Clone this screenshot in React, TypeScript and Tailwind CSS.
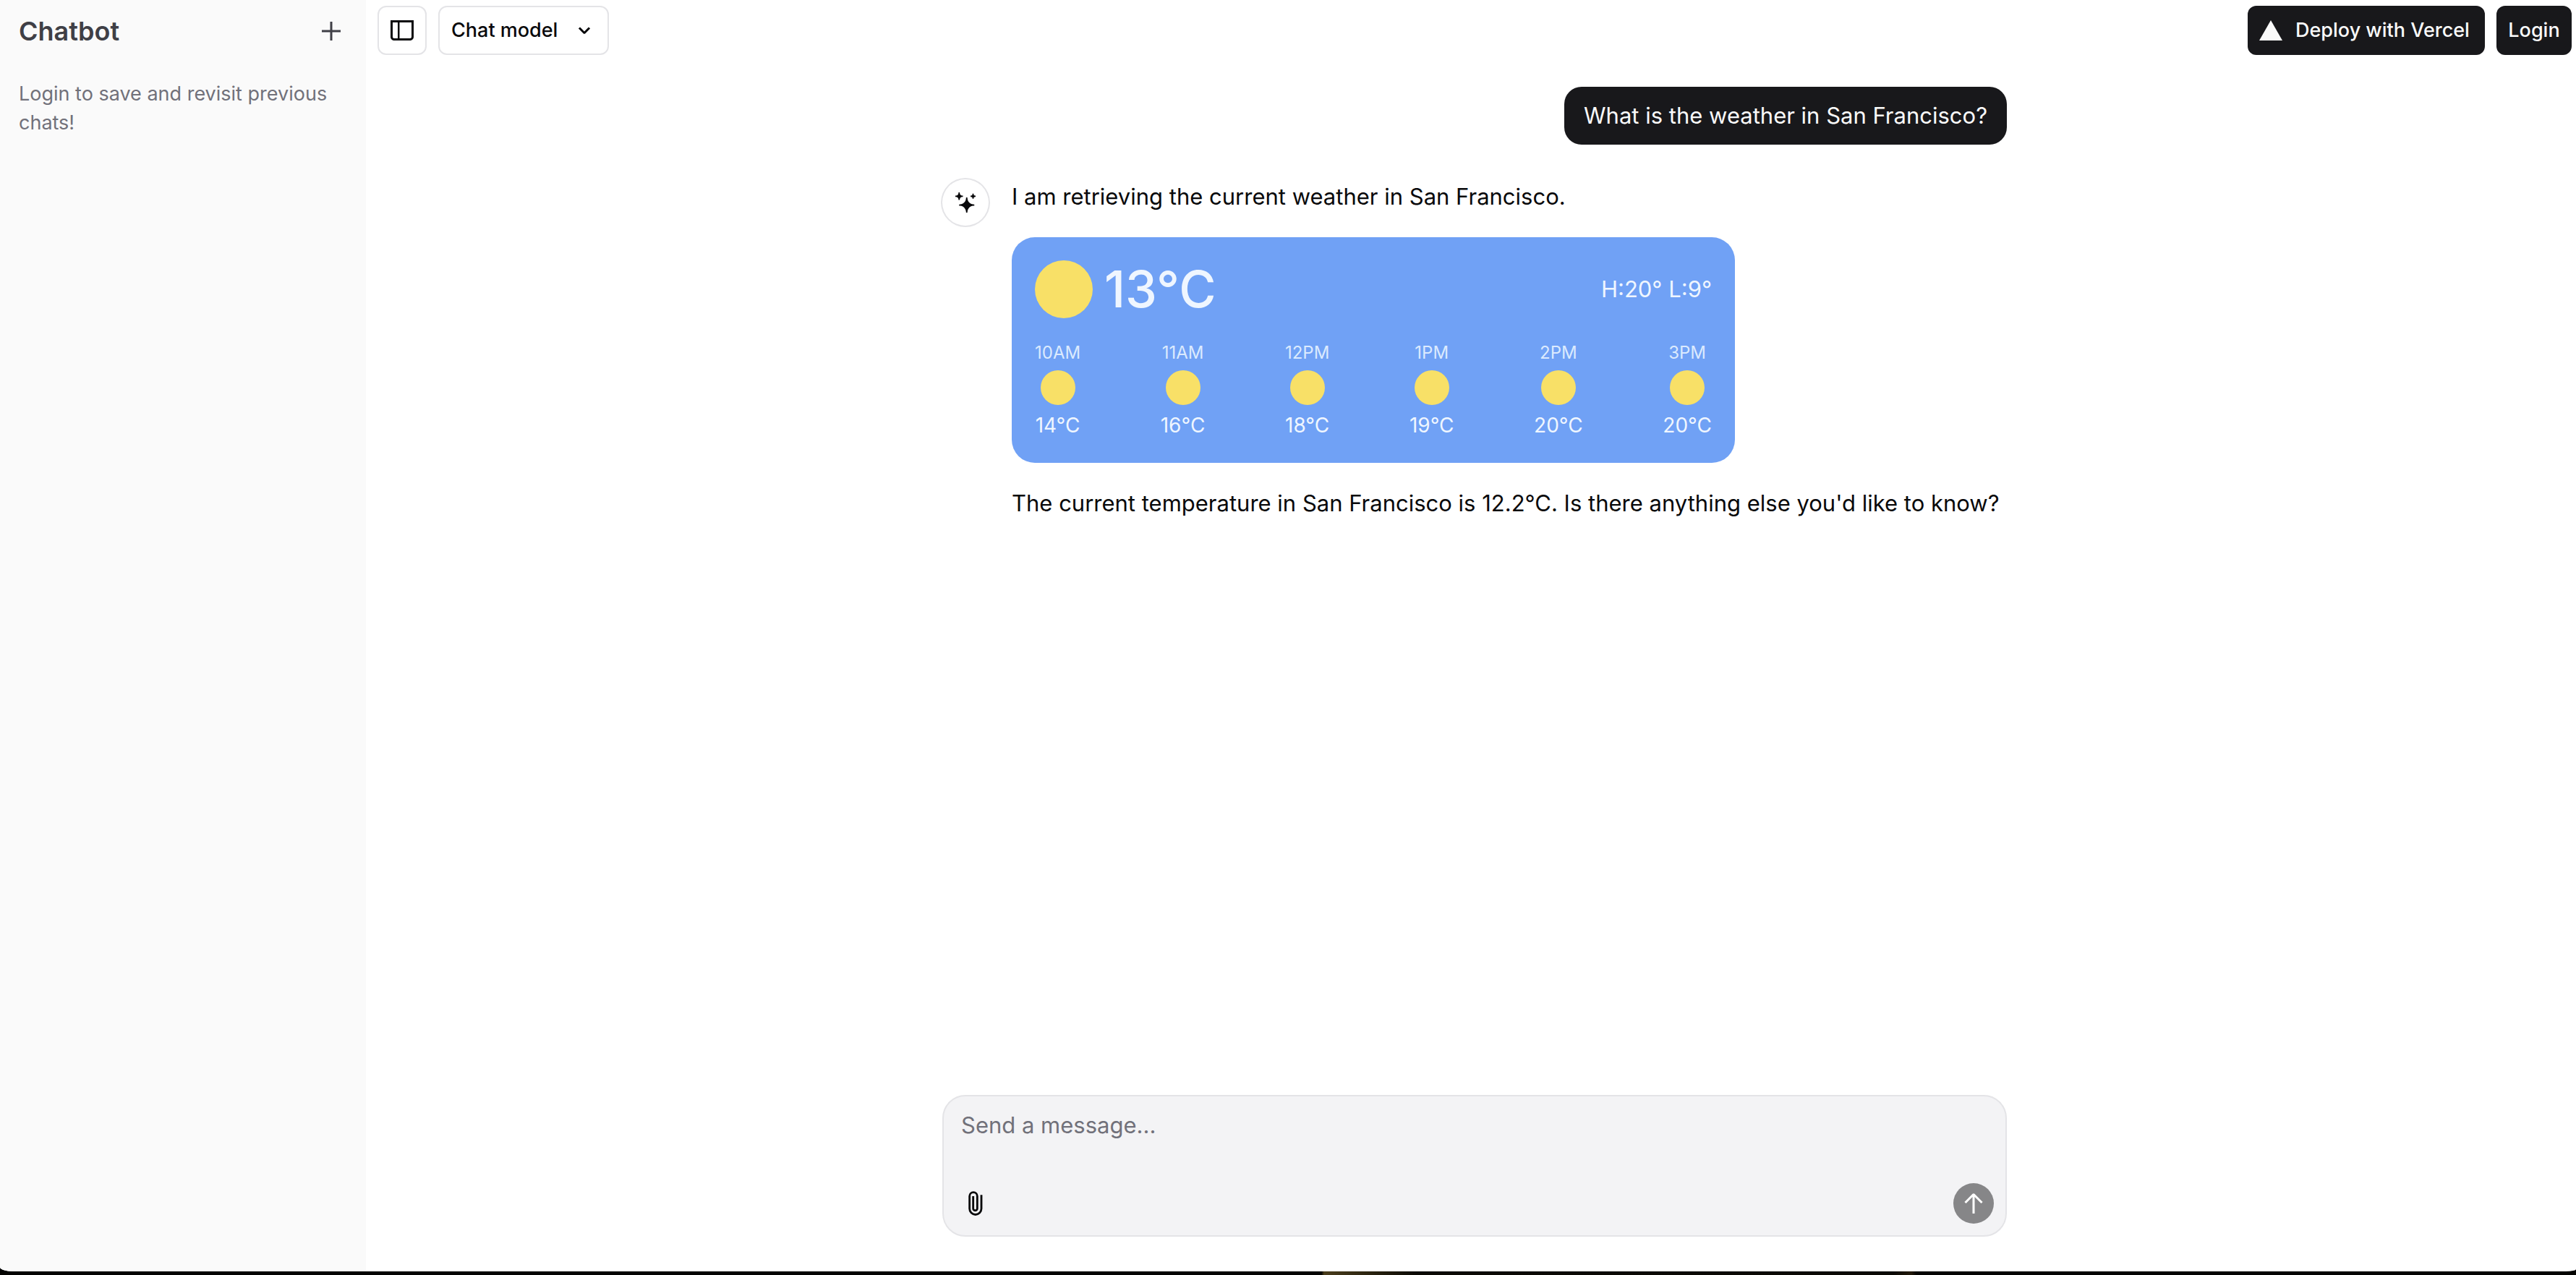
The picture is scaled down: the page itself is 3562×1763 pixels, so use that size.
import type { ReactNode } from "react";

function Icon({ children, className = "size-8" }: { children: ReactNode; className?: string }) {
  return (
    <svg viewBox="0 0 16 16" fill="currentColor" fillRule="evenodd" clipRule="evenodd" aria-hidden="true" className={`shrink-0 ${className}`}>
      {children}
    </svg>
  );
}

const PlusIcon = () => (
  <Icon>
    <path d="M8.75 1.5V7.25H14.5V8.75H8.75V14.5H7.25V8.75H1.5V7.25H7.25V1.5H8.75Z" />
  </Icon>
);

const SidebarIcon = () => (
  <Icon>
    <path fillRule="evenodd" d="M6.245 2.5H14.5V12.5C14.5 13.0523 14.0523 13.5 13.5 13.5H6.245V2.5ZM4.995 2.5H1.5V12.5C1.5 13.0523 1.94772 13.5 2.5 13.5H4.995V2.5ZM0 1H1.5H14.5H16V2.5V12.5C16 13.8807 14.8807 15 13.5 15H2.5C1.11929 15 0 13.8807 0 12.5V2.5V1Z" />
  </Icon>
);

const ChevronIcon = () => (
  <Icon>
    <path d="M12.0607 6.74999L11.5303 7.28032L8.7071 10.1035C8.31657 10.4941 7.68341 10.4941 7.29288 10.1035L4.46966 7.28032L3.93933 6.74999L4.99999 5.68933L5.53032 6.21966L7.99999 8.68933L10.4697 6.21966L11 5.68933L12.0607 6.74999Z" />
  </Icon>
);

const TriangleIcon = () => (
  <Icon>
    <path d="M8 1L16 15H0L8 1Z" />
  </Icon>
);

const SparklesIcon = () => (
  <Icon className="size-7">
    <path d="M2.5 0.5V0H3.5V0.5C3.5 1.60457 4.39543 2.5 5.5 2.5H6V3V3.5H5.5C4.39543 3.5 3.5 4.39543 3.5 5.5V6H3H2.5V5.5C2.5 4.39543 1.60457 3.5 0.5 3.5H0V3V2.5H0.5C1.60457 2.5 2.5 1.60457 2.5 0.5Z" />
    <path d="M14.5 4.5V5H13.5V4.5C13.5 3.94772 13.0523 3.5 12.5 3.5H12V3V2.5H12.5C13.0523 2.5 13.5 2.05228 13.5 1.5V1H14H14.5V1.5C14.5 2.05228 14.9477 2.5 15.5 2.5H16V3V3.5H15.5C14.9477 3.5 14.5 3.94772 14.5 4.5Z" />
    <path d="M8.40706 4.92939L8.5 4H9.5L9.59294 4.92939C9.82973 7.29734 11.7027 9.17027 14.0706 9.40706L15 9.5V10.5L14.0706 10.5929C11.7027 10.8297 9.82973 12.7027 9.59294 15.0706L9.5 16H8.5L8.40706 15.0706C8.17027 12.7027 6.29734 10.8297 3.92939 10.5929L3 10.5V9.5L3.92939 9.40706C6.29734 9.17027 8.17027 7.29734 8.40706 4.92939Z" />
  </Icon>
);

const PaperclipIcon = () => (
  <svg viewBox="0 0 84 120" fill="none" stroke="currentColor" strokeWidth="8.5" aria-hidden="true" className="h-10 w-7">
    <path d="M66 25V82A24.5 24.5 0 0 1 17 82V30A16 16 0 0 1 49 30V81A8.5 8.5 0 0 1 32 81V30" />
  </svg>
);

const ArrowUpIcon = () => (
  <Icon>
    <path d="M8.70711 1.39644C8.31659 1.00592 7.68342 1.00592 7.2929 1.39644L2.21968 6.46966L1.68935 6.99999L2.75001 8.06065L3.28034 7.53032L7.25001 3.56065V14.25V15H8.75001V14.25V3.56065L12.7197 7.53032L13.25 8.06065L14.3107 6.99999L13.7803 6.46966L8.70711 1.39644Z" />
  </Icon>
);

const hours = [
  { time: "10AM", temp: "14°C" },
  { time: "11AM", temp: "16°C" },
  { time: "12PM", temp: "18°C" },
  { time: "1PM", temp: "19°C" },
  { time: "2PM", temp: "20°C" },
  { time: "3PM", temp: "20°C" },
];

function Sidebar() {
  return (
    <aside className="w-[506px] shrink-0 bg-[#fafafa] pl-[26px]">
      <div className="flex items-center justify-between pt-2 pr-4">
        <a href="#home" className="text-[36px] leading-[70px] font-semibold text-[#3f3f46]">Chatbot</a>
        <button type="button" aria-label="New chat" className="flex size-16 items-center justify-center rounded-xl text-[#3f3f46]">
          <PlusIcon />
        </button>
      </div>
      <p className="mt-8 pr-8 text-[27px] leading-10 text-[#71717a]">Login to save and revisit previous chats!</p>
    </aside>
  );
}

function Header() {
  return (
    <header className="flex items-center gap-4 pt-2 pr-[6px] pl-4 text-[27px] font-medium">
      <button type="button" aria-label="Toggle sidebar" className="flex size-[68px] items-center justify-center rounded-xl border-2 border-[#e4e4e7]">
        <SidebarIcon />
      </button>
      <button type="button" className="flex h-[68px] w-[236px] items-center justify-between rounded-xl border-2 border-[#e4e4e7] px-4">
        Chat model
        <ChevronIcon />
      </button>
      <a href="#deploy" className="ml-auto flex h-[68px] min-w-[328px] items-center gap-[18px] rounded-xl bg-[#18181b] px-4 text-[#fafafa]">
        <TriangleIcon />
        Deploy with Vercel
      </a>
      <a href="#login" className="flex h-[68px] min-w-[104px] items-center justify-center rounded-xl bg-[#18181b] px-4 text-[#fafafa]">Login</a>
    </header>
  );
}

function WeatherCard() {
  return (
    <section aria-label="Weather" className="flex w-full max-w-[1000px] flex-col gap-8 rounded-[32px] bg-[#70a1f5] p-8">
      <div className="flex items-center justify-between">
        <div className="flex items-center gap-4">
          <div className="size-20 rounded-full bg-[#f8e067]" />
          <div className="text-[70px] leading-20 font-medium text-[#eff6ff]">13°C</div>
        </div>
        <div className="text-[31px] leading-12 text-[#eff6ff]">H:20° L:9°</div>
      </div>
      <ul className="flex justify-between">
        {hours.map(({ time, temp }) => (
          <li key={time} className="flex flex-col items-center gap-2">
            <span className="text-[24px] leading-8 text-[#dbeafe]">{time}</span>
            <span className="size-12 rounded-full bg-[#f8e067]" />
            <span className="text-[28px] leading-10 text-[#eff6ff]">{temp}</span>
          </li>
        ))}
      </ul>
    </section>
  );
}

function Composer() {
  return (
    <form className="mb-12 flex flex-col rounded-[32px] border-2 border-[#e4e4e7] bg-[#f3f3f5]">
      <textarea
        aria-label="Message"
        placeholder="Send a message..."
        className="h-[104px] resize-none bg-transparent px-6 pt-4 text-[31px] leading-12 outline-none placeholder:text-[#71717a]"
      />
      <div className="flex items-center justify-between p-4">
        <button type="button" aria-label="Attach file" className="flex size-14 items-center justify-center">
          <PaperclipIcon />
        </button>
        <button type="submit" aria-label="Send message" className="flex size-14 items-center justify-center rounded-full bg-[#868688] text-white">
          <ArrowUpIcon />
        </button>
      </div>
    </form>
  );
}

export default function App() {
  return (
    <div className="flex min-h-screen flex-col bg-black font-[Inter,sans-serif] text-[#09090b]">
      <div className="flex flex-1 overflow-hidden rounded-br-[14px_3px] rounded-bl-[18px_6px] bg-white">
        <Sidebar />
        <div className="flex min-w-0 flex-1 flex-col">
          <Header />
          <div className="flex flex-1 justify-center pl-[10px]">
            <div className="flex w-full max-w-[1472px] flex-col">
              <main className="flex flex-1 flex-col gap-12 pt-11">
                <div className="self-end rounded-3xl bg-[#18181b] px-[27px] py-4 text-[31px] leading-12 text-[#fafafa]">
                  What is the weather in San Francisco?
                </div>
                <div className="flex gap-8">
                  <div className="flex size-16 shrink-0 items-center justify-center rounded-full ring-2 ring-[#e4e4e7]">
                    <SparklesIcon />
                  </div>
                  <div className="flex min-w-0 flex-1 flex-col gap-8 text-[31px] leading-12">
                    <p>I am retrieving the current weather in San Francisco.</p>
                    <WeatherCard />
                    <p>The current temperature in San Francisco is 12.2°C. Is there anything else you'd like to know?</p>
                  </div>
                </div>
              </main>
              <Composer />
            </div>
          </div>
        </div>
      </div>
      <div className="h-[5px] bg-[linear-gradient(90deg,#040402_51.3%,#4a3d1c_51.4%,#0b0a04_55%,#0a0904_73.5%,#22190a_74.2%,#040402_74.4%)]" />
    </div>
  );
}
